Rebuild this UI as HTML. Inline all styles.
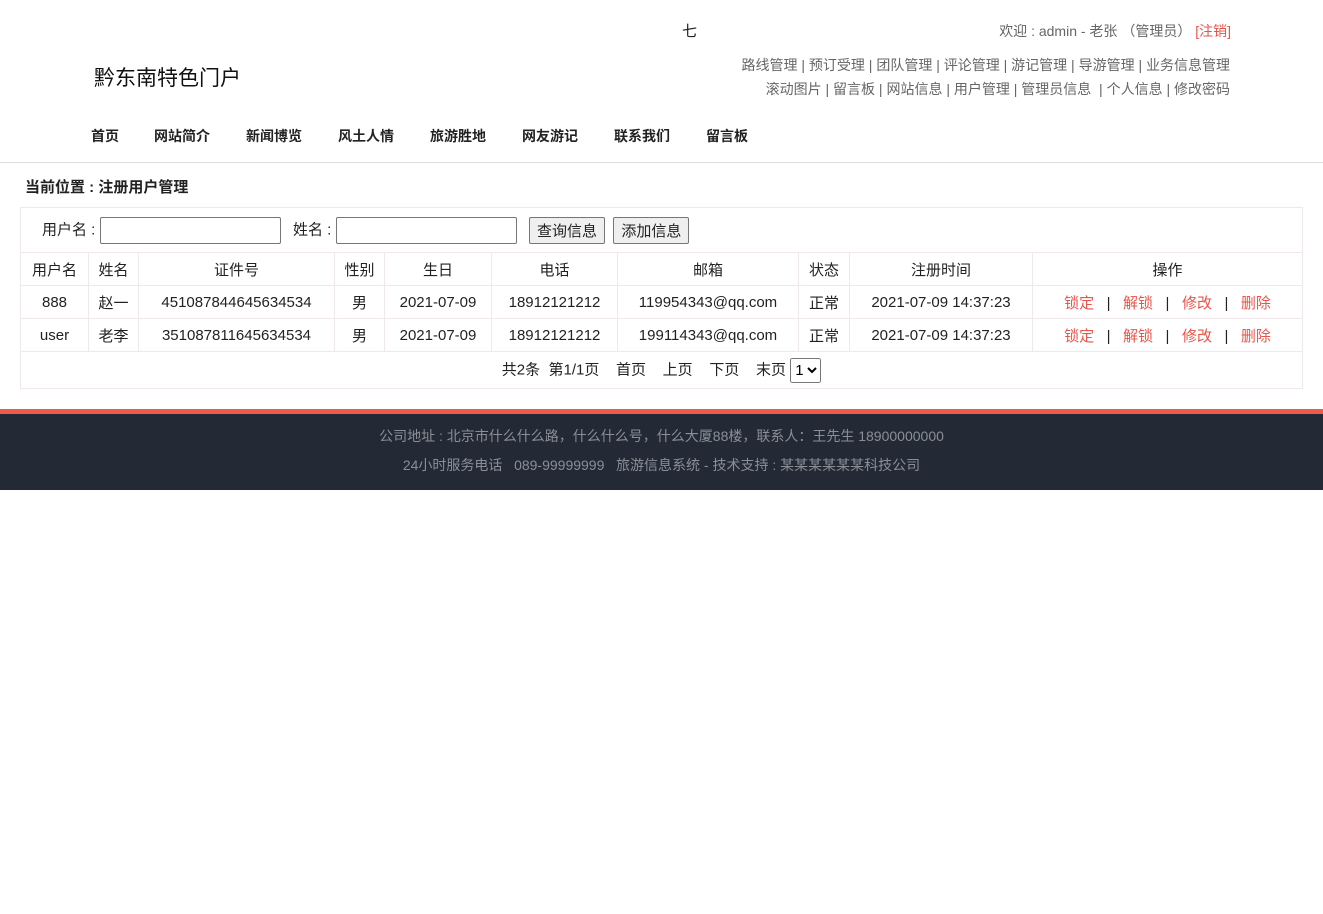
<!DOCTYPE html>
<html><head><meta charset="utf-8">
<style>
body{margin:0;width:1323px;height:914px;background:#fff;font-family:"Liberation Sans","Noto Sans CJK SC",sans-serif;color:#222;position:relative;overflow:hidden}
.a{position:absolute;white-space:nowrap}
.gray{color:#666;font-size:14px}
.nav span{position:absolute;top:126px;font-size:14px;font-weight:bold;color:#222}
table{position:absolute;left:20px;top:207px;width:1283px;border-collapse:collapse;font-size:15px}
td{border:1px solid #f0e8ea;text-align:center;height:32px;padding:0}
.red{color:#e8554a}
input.t{vertical-align:middle;padding:0;box-sizing:border-box;width:181px;height:27px;border:1px solid #767676;border-radius:2px}
button{font:15px "Liberation Sans","Noto Sans CJK SC",sans-serif;height:27px;width:76px;padding:0;border:1px solid #767676;border-radius:2px;background:#efefef;color:#222;vertical-align:middle}
</style></head><body>
<div class="a" style="left:682px;top:20px;font-size:15px">七</div>
<div class="a gray" style="right:92px;top:21px">欢迎 : admin - 老张 （管理员） <span class="red">[注销]</span></div>
<div class="a gray" style="right:93px;top:55px">路线管理 | 预订受理 | 团队管理 | 评论管理 | 游记管理 | 导游管理 | 业务信息管理</div>
<div class="a gray" style="right:93px;top:79px">滚动图片 | 留言板 | 网站信息 | 用户管理 | 管理员信息 &nbsp;| 个人信息 | 修改密码</div>
<div class="a" style="left:94px;top:62px;font-size:21px;color:#111">黔东南特色门户</div>
<div class="nav">
<span style="left:91px">首页</span><span style="left:154px">网站简介</span><span style="left:246px">新闻博览</span><span style="left:338px">风土人情</span><span style="left:430px">旅游胜地</span><span style="left:522px">网友游记</span><span style="left:614px">联系我们</span><span style="left:706px">留言板</span>
</div>
<div class="a" style="left:0;top:162px;width:1323px;height:1px;background:#ddd"></div>
<div class="a" style="left:25px;top:176px;font-size:15px;font-weight:bold">当前位置 : 注册用户管理</div>
<table>
<tr><td colspan="10" style="height:44px;text-align:left;padding-left:21px">用户名 : <input class="t"> &nbsp; 姓名 : <input class="t"> &nbsp; <button>查询信息</button> &nbsp;<button>添加信息</button></td></tr>
<tr><td style="width:67px">用户名</td><td style="width:49px">姓名</td><td style="width:195px">证件号</td><td style="width:49px">性别</td><td style="width:106px">生日</td><td style="width:125px">电话</td><td style="width:180px">邮箱</td><td style="width:50px">状态</td><td style="width:182px">注册时间</td><td>操作</td></tr>
<tr><td>888</td><td>赵一</td><td>451087844645634534</td><td>男</td><td>2021-07-09</td><td>18912121212</td><td>119954343@qq.com</td><td>正常</td><td>2021-07-09 14:37:23</td><td><span class="red">锁定</span> &nbsp; | &nbsp; <span class="red">解锁</span> &nbsp; | &nbsp; <span class="red">修改</span> &nbsp; | &nbsp; <span class="red">删除</span></td></tr>
<tr><td>user</td><td>老李</td><td>351087811645634534</td><td>男</td><td>2021-07-09</td><td>18912121212</td><td>199114343@qq.com</td><td>正常</td><td>2021-07-09 14:37:23</td><td><span class="red">锁定</span> &nbsp; | &nbsp; <span class="red">解锁</span> &nbsp; | &nbsp; <span class="red">修改</span> &nbsp; | &nbsp; <span class="red">删除</span></td></tr>
<tr><td colspan="10" style="height:36px">共2条 &nbsp;第1/1页 &nbsp; &nbsp;首页 &nbsp; &nbsp;上页 &nbsp; &nbsp;下页 &nbsp; &nbsp;末页 <select style="height:25px;font-size:15px;vertical-align:middle"><option>1</option></select></td></tr>
</table>
<div class="a" style="left:0;top:409px;width:1323px;height:5px;background:#f05a4a"></div>
<div class="a" style="left:0;top:414px;width:1323px;height:76px;background:#232a35"></div>
<div class="a" style="left:0;top:426px;width:1323px;text-align:center;color:#8a8f96;font-size:14px">公司地址 : 北京市什么什么路，什么什么号，什么大厦88楼，联系人：王先生 18900000000</div>
<div class="a" style="left:0;top:455px;width:1323px;text-align:center;color:#8a8f96;font-size:14px">24小时服务电话 &nbsp; 089-99999999 &nbsp; 旅游信息系统 - 技术支持 : 某某某某某某科技公司</div>
</body></html>
